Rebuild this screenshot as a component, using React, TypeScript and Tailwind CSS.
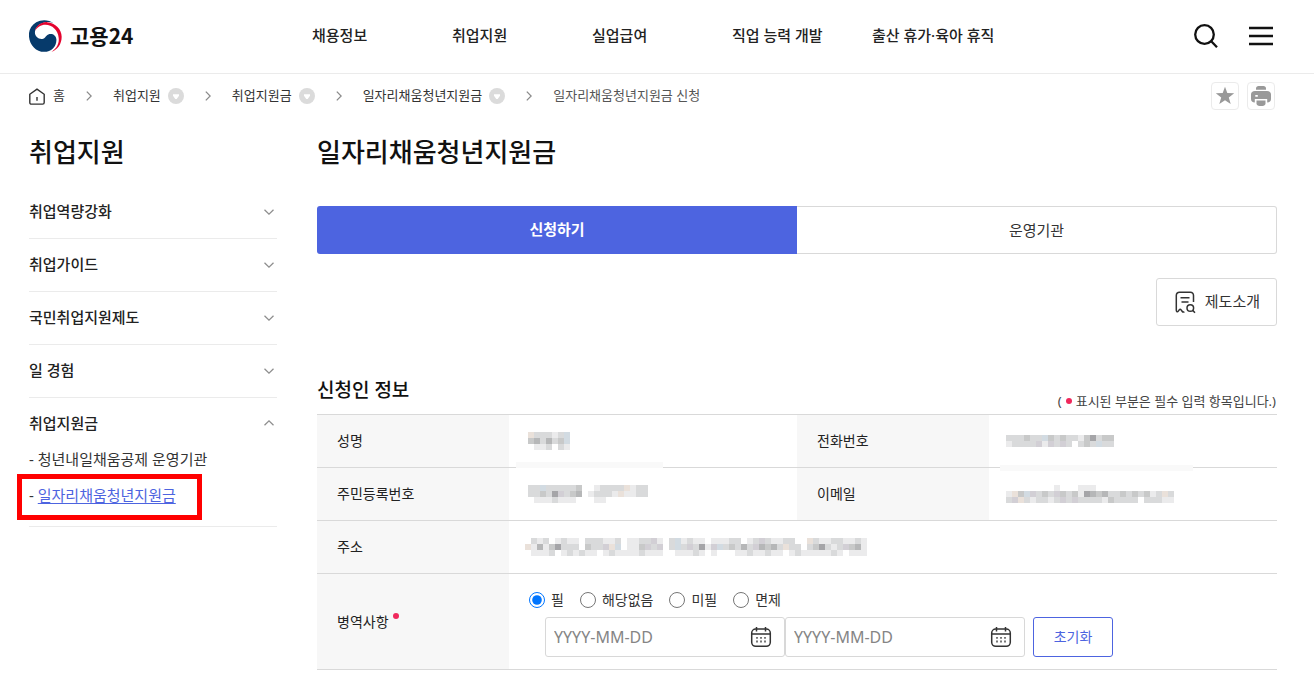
import React from 'react';

const navItems = ['채용정보', '취업지원', '실업급여', '직업 능력 개발', '출산 휴가·육아 휴직'];
const sideItems = ['취업역량강화', '취업가이드', '국민취업지원제도', '일 경험'];
const crumbs = ['취업지원', '취업지원금', '일자리채움청년지원금'];
const military = ['필', '해당없음', '미필', '면제'];

// Masked personal data: one letter per block, f is blank
const masks = {
  name: ['gdddedh', 'cbdbdch', 'feedfde'],
  id: ['ddhdddddcffeddddgedd', 'ddcdaidcbfedddegeedd', 'feeedeeefffeefffffff'],
  phone: ['dddcddhcdcddecadcc', 'eddddieididfdcdhdd'],
  email: ['ffffffffefffeeefffffffffffff', 'egchidcdicdceabcbddcdcdcedgd', 'digdeddedididdddecddddfdddee'],
  address: [
    'fdedfedeefdddeedfeeddiefdhedeefeeeddfedideeddffgdeeddeede',
    'gebecadddfcddighfeecidifdhdidaeihdcdbdibcbdgddfdcadedicbe',
    'feeedfededeefedeeeedeeeffeeedefefffeedeedeefedeeeeedefeee',
  ],
};

const shades: Record<string, string> = {
  a: '#a5a5a8',
  b: '#b6b7b8',
  c: '#c8c9c9',
  d: '#d9dadb',
  e: '#ebebec',
  g: '#eae1da',
  h: '#d2dbe2',
  i: '#d2cfd5',
};

const Mask: React.FC<{ rows: string[]; className?: string }> = ({ rows, className }) => (
  <svg
    className={className}
    width={rows[0].length * 6}
    height={rows.length * 6}
    shapeRendering="crispEdges"
    aria-hidden="true"
  >
    {rows.map((row, y) =>
      row.split('').map((c, x) =>
        shades[c] ? <rect key={`${x}-${y}`} x={x * 6} y={y * 6} width="6" height="6" fill={shades[c]} /> : null
      )
    )}
  </svg>
);

const Logo: React.FC = () => (
  <svg width="33" height="32" viewBox="0 0 100 96" aria-hidden="true">
    <path
      fill="#063a6b"
      d="M75 9C60-2 38-3 22 6 5 16-2 33 0 50c2 26 22 46 46 46 22 0 38-17 37-38-1-12-11-18-21-16-10 2-12 14-22 15-13 1-23-9-22-22C19 20 35 7 52 6c8-1 16 0 23 3z"
    />
    <path
      fill="#e4032e"
      d="M18 33C22 16 38 5 55 6c25 2 44 21 44 44 0 22-12 39-31 46 16-10 24-26 22-42C88 30 70 14 50 14c-14 0-26 8-32 19z"
    />
  </svg>
);

const Arrow: React.FC<{ up?: boolean }> = ({ up }) => (
  <svg width="10" height="6" viewBox="0 0 10 6" fill="none" stroke="#8e8e8e" strokeWidth="1.3" aria-hidden="true">
    <path d={up ? 'M.5 5.200 5 .9l4.500 4.300' : 'M.5.800 5 5.100 9.500.8'} />
  </svg>
);

const Separator: React.FC = () => (
  <span className="flex w-12 justify-center">
    <svg width="6" height="10" viewBox="0 0 6 10" fill="none" stroke="#8a8a8a" strokeWidth="1.3" aria-hidden="true">
      <path d="M.8.600 5.200 5 .8 9.400" />
    </svg>
  </span>
);

const CalendarIcon: React.FC = () => (
  <svg width="22" height="22" viewBox="0 0 22 22" fill="none" stroke="#333" strokeWidth="1.5" aria-hidden="true">
    <rect x="1.700" y="3" width="18.600" height="17.300" rx="4" />
    <path d="M1.700 8h18.600M6.500 1v4.500M15.500 1v4.500" />
    <path d="M6 11.800h2m2 0h2m2 0h2M6 15.500h2m2 0h2m2 0h2" strokeWidth="1.800" stroke="#777" />
  </svg>
);

const DateField: React.FC<{ label: string }> = ({ label }) => (
  <div className="flex h-10 w-60 items-center rounded-[3px] border border-[#d8d8d8] pl-2 pr-3">
    <input
      type="text"
      aria-label={label}
      placeholder="YYYY-MM-DD"
      className="min-w-0 flex-1 bg-transparent text-base text-[#555] outline-none placeholder:text-[#858585]"
    />
    <button type="button" aria-label={`${label} 선택`}>
      <CalendarIcon />
    </button>
  </div>
);

const Header: React.FC = () => (
  <header className="flex h-[74px] items-center border-b border-[#ebebeb] pb-[2px] pl-[29px] pr-10">
    <a
      href="#"
      className="flex w-[283px] items-center gap-2 font-['Noto_Sans_CJK_KR',sans-serif] text-[21px] font-bold text-[#111]"
    >
      <Logo />
      고용24
    </a>
    <nav className="flex flex-1 text-[15px] font-medium text-[#222]">
      {navItems.map((item) => (
        <a key={item} href="#" className="w-[140px] whitespace-nowrap">
          {item}
        </a>
      ))}
    </nav>
    <div className="flex items-center gap-7">
      <button type="button" aria-label="검색">
        <svg width="28" height="28" viewBox="0 0 28 28" fill="none" stroke="#111" strokeWidth="2.300">
          <circle cx="12.500" cy="12.500" r="9.300" />
          <path d="m19 19 6 6.300" />
        </svg>
      </button>
      <button type="button" aria-label="전체메뉴">
        <svg width="26" height="26" viewBox="0 0 26 26" stroke="#111" strokeWidth="2.300">
          <path d="M1 5h24M1 13h24M1 21h24" />
        </svg>
      </button>
    </div>
  </header>
);

const Breadcrumb: React.FC = () => (
  <div className="flex h-11 items-center justify-between pl-[29px] pr-[39px]">
    <nav aria-label="현재 위치" className="flex items-center text-[13px] text-[#333]">
      <a href="#" className="flex items-center gap-2">
        <svg width="16" height="17" viewBox="0 0 16 17" fill="none" stroke="#333" strokeWidth="1.400">
          <path d="M.8 6.300 8 1.200l7.200 5.100v8.200c0 1-.6 1.600-1.600 1.600H2.400c-1 0-1.600-.6-1.600-1.600z" />
          <path d="M8 9v3.800" />
        </svg>
        홈
      </a>
      {crumbs.map((crumb) => (
        <React.Fragment key={crumb}>
          <Separator />
          <a href="#">{crumb}</a>
          <button type="button" aria-label={`${crumb} 메뉴`} className="ml-[7px]">
            <svg width="16" height="16" viewBox="0 0 16 16">
              <circle cx="8" cy="8" r="8" fill="#dbdbdb" />
              <path d="M5 6.200h6v1.600L8.700 11H7.300L5 7.800z" fill="#fff" />
            </svg>
          </button>
        </React.Fragment>
      ))}
      <Separator />
      <span className="text-[#555]">일자리채움청년지원금 신청</span>
    </nav>
    <div className="flex gap-2">
      <button
        type="button"
        aria-label="즐겨찾기"
        className="flex size-7 items-center justify-center rounded border border-[#ebebeb]"
      >
        <svg width="20" height="20" viewBox="0 0 20 20" fill="#999">
          <path d="m10 .8 2.300 6.300 6.900.2-5.400 4.200 1.900 6.500L10 14.200 4.300 18l1.900-6.500L.8 7.300l6.900-.2z" />
        </svg>
      </button>
      <button
        type="button"
        aria-label="인쇄"
        className="flex size-7 items-center justify-center rounded border border-[#ebebeb]"
      >
        <svg width="20" height="20" viewBox="0 0 20 20" fill="#999">
          <path d="M5 3.800V2.500C5 1 6 0 7.500 0h5C14 0 15 1 15 2.500v1.300z" />
          <path
            d="M4 5h12c2.500 0 4 1.400 4 3.500V13c0 2.200-1.400 3.500-3.800 3.500V13H3.800v3.500C1.400 16.500 0 15.200 0 13V8.500C0 6.400 1.500 5 4 5zm.3 4v1.800h2.500V9z"
            fillRule="evenodd"
          />
          <path d="M5.500 14.500h9v3c0 1.500-1.500 2.500-3 2.500h-3c-1.500 0-3-1-3-2.500z" />
        </svg>
      </button>
    </div>
  </div>
);

const Sidebar: React.FC = () => (
  <aside className="w-[248px] shrink-0">
    <h2 className="text-[26px] font-medium leading-10 text-[#111]">취업지원</h2>
    <ul className="mt-[14px] text-[15px]">
      {sideItems.map((item) => (
        <li key={item} className="border-b border-[#ebebeb]">
          <button
            type="button"
            className="flex h-[52px] w-full items-center justify-between pb-px pr-[3px] font-medium text-[#222]"
          >
            {item}
            <Arrow />
          </button>
        </li>
      ))}
      <li className="border-b border-[#ebebeb] pb-[13px] pt-[13px]">
        <button type="button" className="flex h-6 w-full items-center justify-between pr-[3px] font-medium text-[#222]">
          취업지원금
          <Arrow up />
        </button>
        <ul className="mt-[6px] leading-9 text-[#333]">
          <li>
            - <a href="#">청년내일채움공제 운영기관</a>
          </li>
          <li className="relative">
            -{' '}
            <a href="#" className="text-[#4d64e0] underline underline-offset-2">
              일자리채움청년지원금
            </a>
            <span className="pointer-events-none absolute -left-3 -top-[3px] h-[46px] w-[185px] border-[5px] border-[#ff0000]" />
          </li>
        </ul>
      </li>
    </ul>
  </aside>
);

const th = 'bg-[#f7f7f7] pl-5 text-left font-normal text-[#222]';
const td = 'relative pl-[11px]';

const ApplicantTable: React.FC = () => (
  <table className="w-full table-fixed border-collapse border-t border-[#d9d9d9] text-sm">
    <colgroup>
      <col className="w-1/5" />
      <col className="w-[30%]" />
      <col className="w-1/5" />
      <col className="w-[30%]" />
    </colgroup>
    <tbody>
      <tr className="h-[53px] border-b border-[#d9d9d9]">
        <th scope="row" className={th}>성명</th>
        <td className={td}>
          <Mask rows={masks.name} className="ml-2" />
          <span className="absolute -bottom-px left-[7px] h-[6px] w-[147px] bg-[#f9f9f9]" />
        </td>
        <th scope="row" className={th}>전화번호</th>
        <td className={td}>
          <Mask rows={masks.phone} className="ml-[6px]" />
          <span className="absolute -bottom-1 left-[11px] h-[6px] w-[193px] bg-[#f9f9f9]" />
        </td>
      </tr>
      <tr className="h-[53px] border-b border-[#d9d9d9]">
        <th scope="row" className={th}>주민등록번호</th>
        <td className={td}>
          <Mask rows={masks.id} className="ml-2" />
        </td>
        <th scope="row" className={th}>이메일</th>
        <td className={td}>
          <Mask rows={masks.email} className="ml-[6px]" />
        </td>
      </tr>
      <tr className="h-[53px] border-b border-[#d9d9d9]">
        <th scope="row" className={th}>주소</th>
        <td colSpan={3} className="pl-4">
          <Mask rows={masks.address} />
        </td>
      </tr>
      <tr className="h-24 border-b border-[#d9d9d9]">
        <th scope="row" className={th}>
          <span className="flex gap-1">
            병역사항
            <span className="mt-px size-[6px] rounded-full bg-[#f0285c]" />
          </span>
        </th>
        <td colSpan={3} className="pl-5 pt-px">
          <div className="flex h-6 items-center gap-4 text-[#333]">
            {military.map((item) => (
              <label key={item} className="flex items-center gap-[6px]">
                <input type="radio" name="military" defaultChecked={item === '필'} className="size-4" />
                {item}
              </label>
            ))}
          </div>
          <div className="mt-[5px] flex pl-4">
            <DateField label="복무 시작일" />
            <DateField label="복무 종료일" />
            <button
              type="button"
              className="ml-2 h-10 w-20 rounded-[3px] border border-[#4d64e0] text-sm text-[#4d64e0]"
            >
              초기화
            </button>
          </div>
        </td>
      </tr>
    </tbody>
  </table>
);

const App: React.FC = () => {
  return (
    <div className="min-h-screen bg-white font-['Noto_Sans','Noto_Sans_CJK_KR',sans-serif]">
      <Header />
      <Breadcrumb />
      <div className="flex gap-10 pb-2 pl-[29px] pr-[37px] pt-[14px]">
        <Sidebar />
        <main className="min-w-0 flex-1">
          <h1 className="text-[26px] font-medium leading-10 text-[#111]">일자리채움청년지원금</h1>
          <div className="mt-[34px] grid h-12 grid-cols-2 text-[15px]">
            <button type="button" className="rounded-l-[3px] bg-[#4d64e0] pb-[2px] font-bold text-white">
              신청하기
            </button>
            <button type="button" className="rounded-r-[3px] border border-l-0 border-[#d9d9d9] text-[#333]">
              운영기관
            </button>
          </div>
          <div className="mt-6 flex justify-end">
            <button
              type="button"
              className="flex h-12 items-center gap-2 rounded-[3px] border border-[#d9d9d9] px-4 pb-px text-[15px] text-[#333]"
            >
              <svg width="24" height="24" viewBox="0 0 24 24" fill="none" stroke="#333" strokeWidth="1.500">
                <path d="M20.500 12V5.500c0-2-1-3.200-3.200-3.200H6.500c-2 0-3.200 1.200-3.200 3.200v14.800c0 1.500 1.200 2 2 .8l1-1.300c.5-.7 1.200-.7 1.700 0l1.300 1.700c.5.700 1.300.8 2 .1" />
                <path d="M7.500 7.800h9M8.500 12h7" />
                <circle cx="17.300" cy="18" r="3.300" />
                <path d="m19.700 20.400 2.300 2.300" />
              </svg>
              제도소개
            </button>
          </div>
          <div className="mt-12 flex items-end justify-between">
            <h3 className="pb-2 text-[19px] font-medium leading-8 text-[#111]">신청인 정보</h3>
            <p className="flex items-center pb-px pr-px text-[13px] leading-6 text-[#444]">
              (<span className="mx-1 size-[6px] rounded-full bg-[#f0285c]" />
              표시된 부분은 필수 입력 항목입니다.)
            </p>
          </div>
          <ApplicantTable />
        </main>
      </div>
    </div>
  );
};

export default App;
